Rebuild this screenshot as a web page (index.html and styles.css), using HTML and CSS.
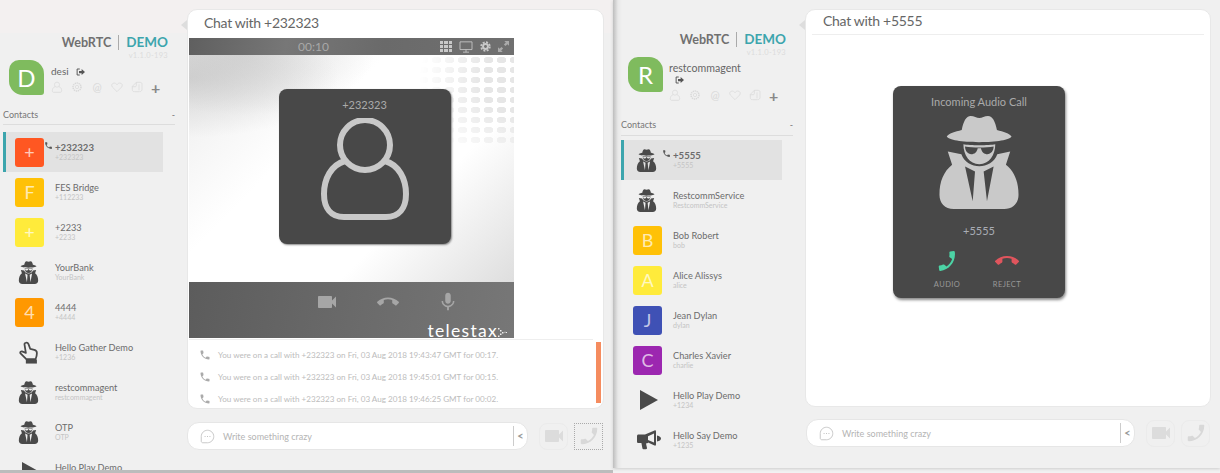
FILE: index.html
```html
<!DOCTYPE html>
<html>
  <head>
    <title>WebRTC Demo</title>
    <link rel="stylesheet" href="styles.css">
  </head>
  <body>
    <svg class="sprites" width="0" height="0">
      <symbol id="spy" viewBox="0 0 238 283">
        <path fill="currentColor" fill-rule="evenodd" d="M67 45C72 20 80 3 94 3C104 3 112 9 120 9C128 9 136 3 146 3C160 3 168 20 173 45C192 50 212 55 217 65C212 75 172 82 119 82C67 82 27 75 22 65C27 55 47 50 67 45ZM72 88C90 92 150 92 168 88C168 120 150 148 120 148C90 148 72 120 72 88ZM77 95C77 108 85 118 96 118C105 118 113 112 115 100H125C127 112 135 118 144 118C155 118 163 108 163 95C140 99 100 99 77 95ZM25 110L66 118C74 142 98 154 120 154C142 154 166 142 174 118L213 110L200 150C225 170 238 200 238 240C238 265 222 283 195 283H43C16 283 0 265 0 240C0 200 13 170 38 150ZM77 155L100 260L107 170ZM163 155L133 170L143 260Z"/>
      </symbol>
      <symbol id="phone" viewBox="0 0 24 24">
        <path fill="currentColor" d="M6.62 10.79c1.44 2.83 3.76 5.14 6.59 6.59l2.2-2.2c.27-.27.67-.36 1.02-.24 1.12.37 2.33.57 3.57.57.55 0 1 .45 1 1V20c0 .55-.45 1-1 1C10.61 21 3 13.39 3 4c0-.55.45-1 1-1h3.5c.55 0 1 .45 1 1 0 1.25.2 2.45.57 3.57.11.35.03.74-.25 1.02l-2.2 2.2z"/>
      </symbol>
      <symbol id="hangup" viewBox="0 0 24 24">
        <path fill="currentColor" d="M12 9c-1.6 0-3.15.25-4.6.72v3.1c0 .39-.23.74-.56.9-.98.49-1.87 1.12-2.66 1.85-.18.18-.43.28-.7.28-.28 0-.53-.11-.71-.29L.29 13.08c-.18-.17-.29-.42-.29-.7 0-.28.11-.53.29-.71C3.34 8.78 7.46 7 12 7s8.66 1.78 11.71 4.67c.18.18.29.43.29.71 0 .28-.11.53-.29.71l-2.48 2.48c-.18.18-.43.29-.71.29-.27 0-.52-.11-.7-.28-.79-.74-1.69-1.36-2.67-1.85-.33-.16-.56-.5-.56-.9v-3.1C15.15 9.25 13.6 9 12 9z"/>
      </symbol>
      <symbol id="cam" viewBox="0 0 24 24">
        <path fill="currentColor" d="M17 10.5V7c0-.55-.45-1-1-1H4c-.55 0-1 .45-1 1v10c0 .55.45 1 1 1h12c.55 0 1-.45 1-1v-3.5l4 4v-11l-4 4z"/>
      </symbol>
      <symbol id="mic" viewBox="0 0 24 24">
        <path fill="currentColor" d="M12 14c1.66 0 2.99-1.34 2.99-3L15 5c0-1.66-1.34-3-3-3S9 3.34 9 5v6c0 1.66 1.34 3 3 3zm5.3-3c0 3-2.54 5.1-5.3 5.1S6.7 14 6.7 11H5c0 3.41 2.72 6.23 6 6.72V21h2v-3.28c3.28-.48 6-3.3 6-6.72h-1.7z"/>
      </symbol>
      <symbol id="hand" viewBox="0 0 22 26">
        <path fill="none" stroke="currentColor" stroke-width="2" stroke-linejoin="round" d="M8 2c1.500-.6 2.500.4 3 1.500l2 5.500 4.500 1c2 .5 3 1.500 3 3.500 0 3-.8 5-1.500 7H8.500L2 14c-1-1.500.8-3 2.500-2L8 13.500 6.500 4c-.2-.8.5-1.700 1.500-2z"/>
        <path fill="currentColor" d="M8 21h12.500v4.500H8z"/>
      </symbol>
      <symbol id="horn" viewBox="0 0 24 20">
        <path fill="currentColor" d="M0 6c0-1 .6-1.600 1.500-1.600H8L17.500.5c1-.4 1.500 0 1.500 1v13c0 1-.5 1.400-1.500 1L11 12.500v.5l-2 .5 1 4.500c.1.700-.3 1.200-1 1.200H6.500c-.6 0-1-.3-1.100-.9L4.400 13H1.500C.6 13 0 12.400 0 11.400zM20 5.500c2.500.5 4 1.500 4 3s-1.500 2.500-4 3z"/>
        <path fill="#f0f0f0" d="M11 6.200l6-2.600v9l-6-2.500z"/>
      </symbol>
      <symbol id="logout" viewBox="0 0 12 10">
        <path fill="none" stroke="currentColor" stroke-width="1.300" d="M5 1H1.500v8H5"/>
        <path fill="currentColor" d="M4 3.500h3.500V1L12 5 7.500 9V6.500H4z"/>
      </symbol>
      <symbol id="user" viewBox="0 0 18 18">
        <circle cx="9" cy="5.500" r="3.800" fill="none" stroke="currentColor"/>
        <path fill="none" stroke="currentColor" d="M6 8.500C3.500 9.500 2 11.500 2 14.500c0 1.500.8 2.500 2.500 2.500h9c1.700 0 2.500-1 2.500-2.500 0-3-1.500-5-4-6"/>
      </symbol>
      <symbol id="cog" viewBox="0 0 18 18">
        <circle cx="9" cy="9" r="6" fill="none" stroke="currentColor" stroke-width="2.200" stroke-dasharray="2 1"/>
        <circle cx="9" cy="9" r="2.500" fill="none" stroke="currentColor"/>
      </symbol>
      <symbol id="cog-solid" viewBox="0 0 18 18">
        <circle cx="9" cy="9" r="7" fill="none" stroke="currentColor" stroke-width="3" stroke-dasharray="3.200 2.300"/>
        <circle cx="9" cy="9" r="4" fill="none" stroke="currentColor" stroke-width="3.200"/>
      </symbol>
      <symbol id="heart" viewBox="0 0 18 18">
        <path fill="none" stroke="currentColor" d="M9 16L2 9C0 6.500 1.500 3 4.800 3 6.700 3 8 4 9 5.500 10 4 11.300 3 13.200 3 16.500 3 18 6.500 16 9z"/>
      </symbol>
      <symbol id="tag" viewBox="0 0 18 18">
        <path fill="none" stroke="currentColor" d="M2 8l6-6h6c1.500 0 2.500 1 2.500 2.500v8c0 2-1.500 3.500-3.500 3.500H5c-2 0-3-1-3-3zM8 2v5c0 1-.5 1.500-1.500 1.500H2M12 5v9"/>
      </symbol>
      <symbol id="bubble" viewBox="0 0 18 18">
        <path fill="none" stroke="currentColor" stroke-width="1.100" d="M9 1.500c4 0 7.500 3.200 7.500 7.500s-3.500 7.500-7.500 7.500H3.500c-1.300 0-2-.8-2-2V9C1.500 4.700 5 1.500 9 1.500z"/>
        <path fill="currentColor" d="M5.500 8.500h1.200v1.200H5.500zM8.400 8.500h1.200v1.200H8.400zM11.300 8.500h1.200v1.200h-1.200z"/>
      </symbol>
      <symbol id="monitor" viewBox="0 0 16 14">
        <path fill="none" stroke="currentColor" d="M1 1h14v9H1zM8 10v3M4.500 13h7"/>
      </symbol>
      <symbol id="expand" viewBox="0 0 14 14">
        <path fill="currentColor" d="M8 0h6v6l-2-2-2.500 2.500-2-2L10 2zM0 14V8l2 2 2.500-2.500 2 2L4 12l2 2z"/>
      </symbol>
      <symbol id="logo-dots" viewBox="0 0 9 9">
        <path fill="currentColor" d="M0 0h1.500v1.500H0zM2 2h1.500v1.500H2zM4 4h1.500v1.500H4zM2 5.500h1.500V7H2zM0 7.500h1.500V9H0zM6.500 3.800h1v1h-1zM8 4h1v1H8z"/>
      </symbol>
    </svg>

    <div class="desk">
      <div class="win win-one">
        <aside class="side">
          <div class="brand"><span class="brand-web">WebRTC</span><span class="brand-demo">DEMO</span></div>
          <div class="version">v1.1.0-193</div>
          <div class="me">
            <div class="me-avatar">D</div>
            <div class="me-info">
              <div class="me-name">desi <svg class="logout"><use href="#logout"/></svg></div>
              <div class="tools">
                <svg><use href="#user"/></svg><svg><use href="#cog"/></svg><span class="at">@</span><svg><use href="#heart"/></svg><svg><use href="#tag"/></svg><span class="plus">+</span>
              </div>
            </div>
          </div>
          <div class="contacts-head"><span>Contacts</span><span>-</span></div>
          <ul class="contacts">
            <li class="contact active"><div class="tile orange">+</div><svg class="call-mark"><use href="#phone"/></svg><div><div class="c-name">+232323</div><div class="c-sub">+232323</div></div></li>
            <li class="contact"><div class="tile amber">F</div><div><div class="c-name">FES Bridge</div><div class="c-sub">+112233</div></div></li>
            <li class="contact"><div class="tile yellow">+</div><div><div class="c-name">+2233</div><div class="c-sub">+2233</div></div></li>
            <li class="contact"><svg class="glyph"><use href="#spy"/></svg><div><div class="c-name">YourBank</div><div class="c-sub">YourBank</div></div></li>
            <li class="contact"><div class="tile deep-amber">4</div><div><div class="c-name">4444</div><div class="c-sub">+4444</div></div></li>
            <li class="contact"><svg class="glyph"><use href="#hand"/></svg><div><div class="c-name">Hello Gather Demo</div><div class="c-sub">+1236</div></div></li>
            <li class="contact"><svg class="glyph"><use href="#spy"/></svg><div><div class="c-name">restcommagent</div><div class="c-sub">restcommagent</div></div></li>
            <li class="contact"><svg class="glyph"><use href="#spy"/></svg><div><div class="c-name">OTP</div><div class="c-sub">OTP</div></div></li>
            <li class="contact"><div class="glyph play"></div><div><div class="c-name">Hello Play Demo</div><div class="c-sub">+1234</div></div></li>
          </ul>
        </aside>
        <main class="chat">
          <section class="card">
            <h2 class="chat-title">Chat with +232323</h2>
            <div class="video">
              <div class="video-top">
                <span class="timer">00:10</span>
                <div class="video-tools">
                  <span class="grid-icon"><i></i><i></i><i></i><i></i><i></i><i></i><i></i><i></i><i></i></span>
                  <svg class="tool-monitor"><use href="#monitor"/></svg>
                  <svg class="tool-cog"><use href="#cog-solid"/></svg>
                  <svg class="tool-expand"><use href="#expand"/></svg>
                </div>
              </div>
              <div class="stage">
                <div class="call-box">
                  <div class="call-number">+232323</div>
                  <svg class="big-user" viewBox="0 0 88 102">
                    <circle cx="44" cy="27" r="25" fill="none" stroke="#c8c8c8" stroke-width="6"/>
                    <path fill="none" stroke="#c8c8c8" stroke-width="6" d="M24 43C10 47 3 61 3 76c0 14 7 23 20 23h42c13 0 20-9 20-23 0-15-7-29-21-33"/>
                  </svg>
                </div>
              </div>
              <div class="video-bottom">
                <div class="video-controls">
                  <svg class="vc-cam"><use href="#cam"/></svg>
                  <svg class="vc-end"><use href="#hangup"/></svg>
                  <svg class="vc-mic"><use href="#mic"/></svg>
                </div>
                <div class="telestax">telestax<svg class="logo-dots"><use href="#logo-dots"/></svg></div>
              </div>
            </div>
            <ul class="log">
              <li><svg><use href="#phone"/></svg>You were on a call with +232323 on Fri, 03 Aug 2018 19:43:47 GMT for 00:17.</li>
              <li><svg><use href="#phone"/></svg>You were on a call with +232323 on Fri, 03 Aug 2018 19:45:01 GMT for 00:15.</li>
              <li><svg><use href="#phone"/></svg>You were on a call with +232323 on Fri, 03 Aug 2018 19:46:25 GMT for 00:02.</li>
            </ul>
            <div class="scroll-thumb"></div>
          </section>
          <div class="composer">
            <div class="input">
              <svg class="bubble"><use href="#bubble"/></svg>
              <span class="placeholder">Write something crazy</span>
              <span class="collapse">&lt;</span>
            </div>
            <button class="round-btn"><svg class="btn-cam"><use href="#cam"/></svg></button>
            <button class="round-btn focused"><svg class="btn-phone"><use href="#phone"/></svg></button>
          </div>
        </main>
      </div>

      <div class="win win-two">
        <aside class="side">
          <div class="brand"><span class="brand-web">WebRTC</span><span class="brand-demo">DEMO</span></div>
          <div class="version">v1.1.0-193</div>
          <div class="me">
            <div class="me-avatar">R</div>
            <div class="me-info">
              <div class="me-name">restcommagent<br><svg class="logout wrapped"><use href="#logout"/></svg></div>
              <div class="tools">
                <svg><use href="#user"/></svg><svg><use href="#cog"/></svg><span class="at">@</span><svg><use href="#heart"/></svg><svg><use href="#tag"/></svg><span class="plus">+</span>
              </div>
            </div>
          </div>
          <div class="contacts-head"><span>Contacts</span><span>-</span></div>
          <ul class="contacts">
            <li class="contact active"><svg class="glyph"><use href="#spy"/></svg><svg class="call-mark"><use href="#phone"/></svg><div><div class="c-name">+5555</div><div class="c-sub">+5555</div></div></li>
            <li class="contact"><svg class="glyph"><use href="#spy"/></svg><div><div class="c-name">RestcommService</div><div class="c-sub">RestcommService</div></div></li>
            <li class="contact"><div class="tile amber">B</div><div><div class="c-name">Bob Robert</div><div class="c-sub">bob</div></div></li>
            <li class="contact"><div class="tile yellow">A</div><div><div class="c-name">Alice Alissys</div><div class="c-sub">alice</div></div></li>
            <li class="contact"><div class="tile indigo">J</div><div><div class="c-name">Jean Dylan</div><div class="c-sub">dylan</div></div></li>
            <li class="contact"><div class="tile purple">C</div><div><div class="c-name">Charles Xavier</div><div class="c-sub">charlie</div></div></li>
            <li class="contact"><div class="glyph play"></div><div><div class="c-name">Hello Play Demo</div><div class="c-sub">+1234</div></div></li>
            <li class="contact"><svg class="glyph horn"><use href="#horn"/></svg><div><div class="c-name">Hello Say Demo</div><div class="c-sub">+1235</div></div></li>
          </ul>
        </aside>
        <main class="chat">
          <section class="card">
            <h2 class="chat-title ruled">Chat with +5555</h2>
            <div class="incoming-wrap">
              <div class="incoming">
                <div class="incoming-title">Incoming Audio Call</div>
                <svg class="big-spy"><use href="#spy"/></svg>
                <div class="incoming-number">+5555</div>
                <div class="answers">
                  <div class="answer"><svg class="accept-icon"><use href="#phone"/></svg><span>AUDIO</span></div>
                  <div class="answer"><svg class="reject-icon"><use href="#hangup"/></svg><span>REJECT</span></div>
                </div>
              </div>
            </div>
          </section>
          <div class="composer">
            <div class="input">
              <svg class="bubble"><use href="#bubble"/></svg>
              <span class="placeholder">Write something crazy</span>
              <span class="collapse">&lt;</span>
            </div>
            <button class="round-btn"><svg class="btn-cam"><use href="#cam"/></svg></button>
            <button class="round-btn"><svg class="btn-phone"><use href="#phone"/></svg></button>
          </div>
        </main>
      </div>
    </div>
  </body>
</html>
```

FILE: styles.css
```css
* {
  box-sizing: border-box;
}

body {
  margin: 0;
  background: #f2f2f2;
  font-family: "Lato", "Liberation Sans", sans-serif;
  color: #666;
}

ul {
  list-style: none;
  margin: 0;
  padding: 0;
}

.sprites {
  position: absolute;
}

.desk {
  display: flex;
  height: 473px;
  overflow: hidden;
}

.win {
  display: flex;
  overflow: hidden;
  background: #f0f0f0;
}

.win-one {
  width: 613px;
  height: 473px;
  border-bottom: 3px solid #bcbcbc;
  background: linear-gradient(#f3f0f0, #f3f0f0 33px, #f0f0f0 33px);
}

.win-two {
  width: 607px;
  height: 468px;
  padding-left: 5px;
  background: linear-gradient(90deg, #bdbdbd, #e8e8e8 5px, #f0f0f0 9px);
  box-shadow: 0 1px 3px #ccc;
}

/* side bar */
.side {
  width: 187px;
  flex-shrink: 0;
  padding: 33px 0 0 3px;
  overflow: hidden;
}

.win-two .side {
  padding-top: 30px;
}

.brand {
  display: flex;
  justify-content: flex-end;
  align-items: center;
  width: 165px;
  height: 18px;
  font-size: 12.6px;
  font-weight: 700;
}

.brand-web {
  color: #707070;
  padding-right: 7px;
  border-right: 1px solid #aaa;
}

.brand-demo {
  color: #3ca5ad;
  padding-left: 7px;
  font-size: 13.5px;
}

.version {
  width: 165px;
  text-align: right;
  font-size: 7.5px;
  line-height: 9px;
  color: #dcdcdc;
  letter-spacing: 0.3px;
}

.me {
  display: flex;
  gap: 7px;
  padding-left: 6px;
}

.win-two .me {
  padding-left: 7px;
  gap: 6px;
}

.me-avatar {
  width: 35px;
  height: 35px;
  flex-shrink: 0;
  border-radius: 10px 14px 3px 14px;
  background: #7fbb5e;
  color: #fff;
  font-size: 24px;
  line-height: 35px;
  text-align: center;
}

.me-name {
  font-size: 10px;
  line-height: 12px;
  margin-top: 5px;
  color: #666;
}

.win-two .me-name {
  font-size: 10.6px;
}

.logout {
  width: 9px;
  height: 8px;
  margin-left: 5px;
  color: #555;
  vertical-align: -1px;
}

.logout.wrapped {
  display: block;
  margin: 2px 0 0 6px;
}

.tools {
  display: flex;
  align-items: center;
  gap: 8px;
  height: 14px;
  margin-top: 3px;
  color: #d8d8d8;
}

.win-two .tools {
  margin-top: 4px;
}

.tools svg {
  width: 12px;
  height: 12px;
}

.at {
  width: 12px;
  font-size: 11px;
  line-height: 12px;
  text-align: center;
}

.plus {
  font-size: 16px;
  line-height: 11px;
  font-weight: 700;
  color: #888;
}

.contacts-head {
  display: flex;
  justify-content: space-between;
  width: 172px;
  margin-top: 14px;
  padding-bottom: 4px;
  border-bottom: 1px solid #ddd;
  font-size: 9px;
  line-height: 11px;
  color: #777;
}

.win-two .contacts-head {
  margin-top: 17px;
  padding-bottom: 5px;
}

.contacts {
  margin-top: 7px;
}

.win-two .contacts {
  margin-top: 4px;
}

.contact {
  position: relative;
  display: flex;
  align-items: center;
  width: 160px;
  height: 40px;
  padding-left: 12px;
  gap: 11px;
}

.win-two .contact {
  width: 161px;
}

.contact.active {
  background: #e2e2e2;
  border-left: 3px solid #3ca5ad;
  padding-left: 9px;
}

.call-mark {
  position: absolute;
  left: 38px;
  top: 9px;
  width: 9px;
  height: 9px;
  color: #555;
}

.tile {
  width: 29px;
  height: 29px;
  flex-shrink: 0;
  border-radius: 3px;
  color: rgba(255, 255, 255, 0.7);
  font-size: 18px;
  line-height: 29px;
  text-align: center;
}

.orange { background: #ff5722; }
.amber { background: #ffc107; }
.yellow { background: #ffeb3b; }
.deep-amber { background: #ff9800; }
.indigo { background: #3f51b5; }
.purple { background: #9c27b0; }

.glyph {
  width: 27px;
  height: 23px;
  margin-right: 2px;
  flex-shrink: 0;
  color: #4a4a4a;
}

.glyph.horn {
  width: 24px;
  height: 20px;
  margin: 0 1px 0 4px;
}

.play {
  width: 0;
  height: 0;
  margin: 0 4px 0 7px;
  border-style: solid;
  border-width: 10px 0 10px 18px;
  border-color: transparent transparent transparent #4a4a4a;
}

.c-name {
  font-size: 9.2px;
  line-height: 11px;
  color: #6c6c6c;
}

.active .c-name {
  font-weight: 700;
  font-size: 9.6px;
}

.c-sub {
  font-size: 7px;
  line-height: 9px;
  color: #c4c4c4;
}

/* chat */
.chat {
  display: flex;
  flex-direction: column;
  padding-top: 9px;
}

.win-one .chat {
  width: 417px;
}

.win-two .chat {
  width: 406px;
}

.card {
  position: relative;
  height: 400px;
  padding: 0 1px;
  background: #fff;
  border: 1px solid #e8e8e8;
  border-radius: 10px;
}

.win-two .card {
  height: 398px;
  padding: 0 6px;
}

.card::before {
  content: "";
  position: absolute;
  left: -7px;
  top: 10px;
  border-style: solid;
  border-width: 5px 6px 5px 0;
  border-color: transparent #ddd transparent transparent;
}

.chat-title {
  margin: 0;
  height: 28px;
  padding-left: 15px;
  font-size: 14px;
  font-weight: 400;
  line-height: 25px;
  letter-spacing: -0.3px;
  color: #666;
}

.chat-title.ruled {
  height: 25px;
  line-height: 21px;
  padding-left: 11px;
  border-bottom: 1px solid #eee;
}

/* video call */
.video {
  display: flex;
  flex-direction: column;
  width: 325px;
  height: 300px;
}

.video-top {
  position: relative;
  display: flex;
  justify-content: flex-end;
  align-items: center;
  height: 17px;
  padding-right: 5px;
  background: linear-gradient(100deg, #5f5f5f, #777 30%, #6a6a6a 60%, #707070);
}

.timer {
  position: absolute;
  left: 109px;
  font-size: 12px;
  line-height: 17px;
  color: #a8a8a8;
}

.video-tools {
  display: flex;
  align-items: center;
  gap: 7px;
  color: #c8c8c8;
}

.grid-icon {
  display: grid;
  grid-template-columns: repeat(3, 3.5px);
  gap: 1px;
}

.grid-icon i {
  height: 3px;
  background: #c8c8c8;
}

.tool-monitor {
  width: 14px;
  height: 12px;
}

.tool-cog {
  width: 11px;
  height: 11px;
}

.tool-expand {
  width: 11px;
  height: 11px;
  color: #aaa;
}

.stage {
  position: relative;
  flex: 1;
  display: flex;
  justify-content: center;
  padding: 34px 0 0 26px;
  background:
    radial-gradient(ellipse 150px 60px at 0 10%, rgba(180, 180, 180, 0.45), transparent),
    radial-gradient(ellipse 130px 60px at 55px 0, rgba(190, 190, 190, 0.45), transparent),
    linear-gradient(135deg, #ececec, #fff 36%, #fff 68%, #dedede);
}

/* halftone dots of the wallpaper */
.stage::before {
  content: "";
  position: absolute;
  top: 0;
  right: 0;
  width: 110px;
  height: 90px;
  background: radial-gradient(ellipse 5px 3.5px, #e6e6e6 90%, transparent) 0 0 / 13px 10px;
  -webkit-mask-image: radial-gradient(circle at 100% 30%, #000 25%, transparent 75%);
  mask-image: radial-gradient(circle at 100% 30%, #000 25%, transparent 75%);
}

.call-box {
  position: relative;
  display: flex;
  flex-direction: column;
  align-items: center;
  width: 172px;
  height: 155px;
  border-radius: 8px;
  background: #484848;
  box-shadow: 1px 1px 2px #888;
}

.call-number {
  margin-top: 10px;
  font-size: 11px;
  line-height: 12px;
  color: #aaa;
}

.big-user {
  width: 88px;
  height: 102px;
  margin-top: 7px;
}

.video-bottom {
  display: flex;
  flex-direction: column;
  height: 56px;
  background: linear-gradient(100deg, #5c5c5c, #6a6a6a 50%, #777);
}

.video-controls {
  display: flex;
  justify-content: center;
  align-items: center;
  gap: 38px;
  height: 40px;
  margin-bottom: 2px;
  padding-left: 71px;
  color: #a6a6a6;
}

.vc-cam {
  width: 24px;
  height: 24px;
}

.vc-end {
  width: 22px;
  height: 22px;
}

.vc-mic {
  width: 22px;
  height: 22px;
}

.telestax {
  align-self: flex-end;
  margin-right: 7px;
  font-size: 17.5px;
  line-height: 14px;
  letter-spacing: 1.3px;
  color: #fff;
}

.logo-dots {
  width: 9px;
  height: 9px;
  color: #eee;
}

/* call log */
.log {
  margin-top: 1px;
  padding: 4px 0 0 10px;
  border-top: 1px solid #eee;
  width: 404px;
}

.log li {
  display: flex;
  align-items: center;
  height: 22px;
  font-size: 8.1px;
  color: #bcbcbc;
}

.log svg {
  width: 12px;
  height: 12px;
  margin-right: 7px;
  color: #aaa;
}

.scroll-thumb {
  position: absolute;
  right: 2px;
  top: 332px;
  width: 5px;
  height: 61px;
  background: #f58c5f;
}

/* incoming call */
.incoming-wrap {
  display: flex;
  justify-content: center;
  padding: 51px 58px 0 0;
}

.incoming {
  display: flex;
  flex-direction: column;
  align-items: center;
  width: 172px;
  height: 212px;
  border-radius: 8px;
  background: #484848;
  box-shadow: 1px 2px 3px #888;
}

.incoming-title {
  margin-top: 9px;
  font-size: 11px;
  line-height: 14px;
  color: #aaa;
}

.big-spy {
  width: 80px;
  height: 94px;
  margin-top: 6px;
  color: #c9c9c9;
}

.incoming-number {
  margin-top: 15px;
  font-size: 11px;
  line-height: 13px;
  color: #a8acb4;
}

.answers {
  display: flex;
  gap: 30px;
  margin: 12px 4px 0 0;
}

.answer {
  display: flex;
  flex-direction: column;
  align-items: center;
  width: 30px;
  font-size: 7.5px;
  letter-spacing: 0.4px;
  color: #999;
}

.accept-icon {
  width: 24px;
  height: 24px;
  color: #4cd3a5;
  transform: rotate(-8deg) scaleX(-1);
}

.reject-icon {
  width: 26px;
  height: 24px;
  color: #e0555d;
}

.answer span {
  margin-top: 7px;
}

/* composer */
.composer {
  display: flex;
  align-items: center;
  margin-top: 13px;
}

.win-two .composer {
  margin-top: 12px;
  padding-left: 1px;
}

.input {
  display: flex;
  align-items: center;
  width: 341px;
  height: 28px;
  padding-left: 12px;
  background: #fff;
  border: 1px solid #e6e6e6;
  border-radius: 12px;
}

.win-two .input {
  width: 329px;
}

.bubble {
  width: 15px;
  height: 15px;
  color: #c4c4c4;
}

.placeholder {
  flex: 1;
  margin-left: 8px;
  font-size: 9px;
  color: #b4b4b4;
}

.collapse {
  width: 14px;
  height: 20px;
  border-left: 1px solid #ccc;
  font-size: 11px;
  font-weight: 700;
  line-height: 20px;
  text-align: center;
  color: #999;
}

.round-btn {
  display: flex;
  justify-content: center;
  align-items: center;
  width: 29px;
  height: 27px;
  padding: 0;
  margin-left: 11px;
  background: #f0f0f0;
  border: 1px solid #ebebeb;
  border-radius: 8px;
}

.round-btn + .round-btn {
  margin-left: 6px;
}

.round-btn.focused {
  border: 1px dotted #aaa;
  border-radius: 0;
}

.btn-cam {
  width: 24px;
  height: 24px;
  color: #dcdcdc;
}

.btn-phone {
  width: 22px;
  height: 22px;
  color: #d8d8d8;
  transform: scaleX(-1);
}
```
